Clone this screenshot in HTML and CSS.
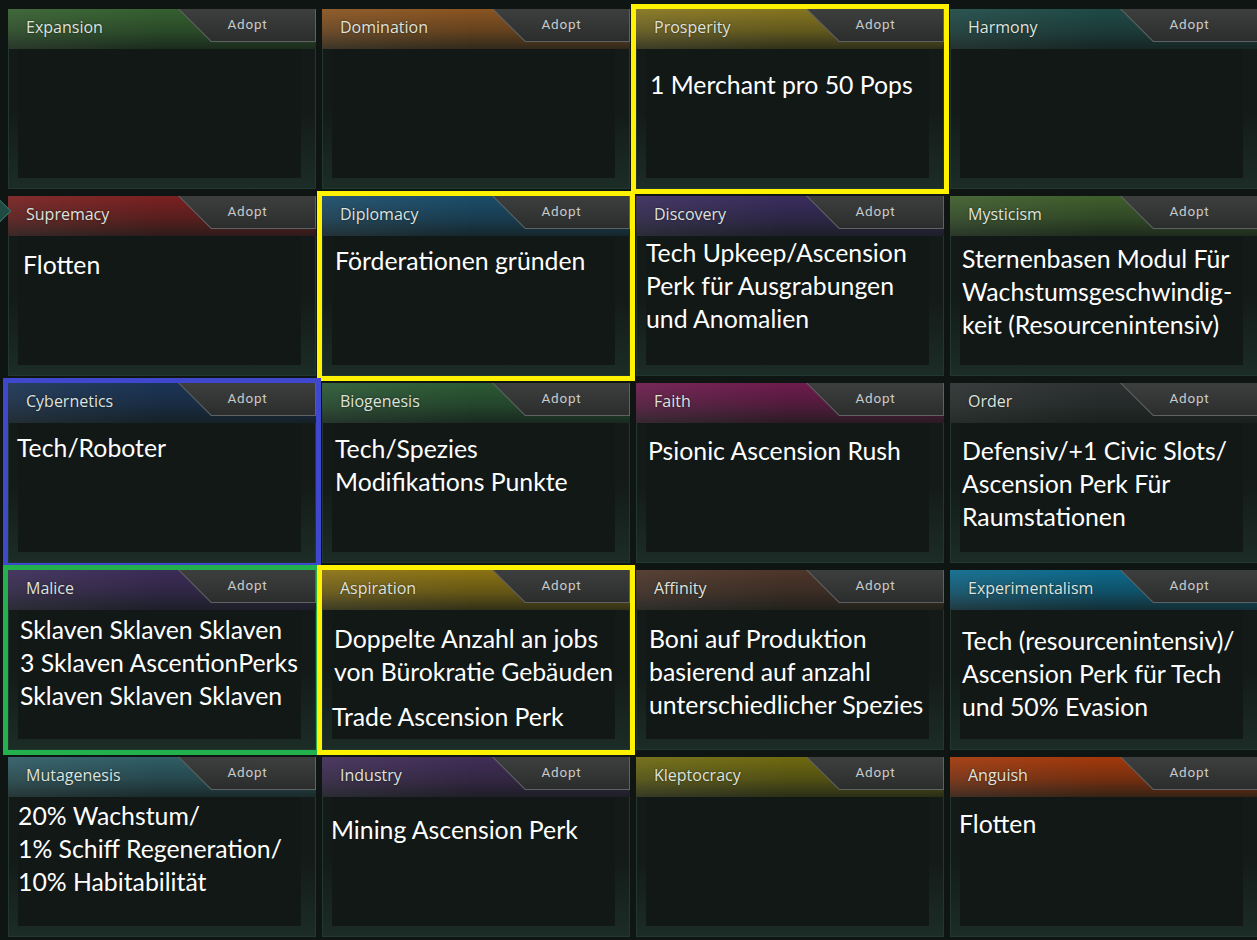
FILE: index.html
```html
<!DOCTYPE html>
<html lang="de">
<head>
<meta charset="utf-8">
<title>Traditions</title>
<link rel="stylesheet" href="styles.css">
</head>
<body>
<div class="edge-mark"></div>
<main class="grid">
  <section class="card expansion">
    <header class="head"><span class="title">Expansion</span><span class="adopt"><span>Adopt</span></span></header>
    <div class="panel"></div>
  </section>
  <section class="card domination">
    <header class="head"><span class="title">Domination</span><span class="adopt"><span>Adopt</span></span></header>
    <div class="panel"></div>
  </section>
  <section class="card prosperity mark-yellow">
    <header class="head"><span class="title">Prosperity</span><span class="adopt"><span>Adopt</span></span></header>
    <div class="panel drop-19 in-4"><p>1 Merchant pro 50 Pops</p></div>
  </section>
  <section class="card harmony">
    <header class="head"><span class="title">Harmony</span><span class="adopt"><span>Adopt</span></span></header>
    <div class="panel"></div>
  </section>

  <section class="card supremacy">
    <header class="head"><span class="title">Supremacy</span><span class="adopt"><span>Adopt</span></span></header>
    <div class="panel drop-12 in-5"><p>Flotten</p></div>
  </section>
  <section class="card diplomacy mark-yellow">
    <header class="head"><span class="title">Diplomacy</span><span class="adopt"><span>Adopt</span></span></header>
    <div class="panel drop-8 in-3"><p>Förderationen gründen</p></div>
  </section>
  <section class="card discovery">
    <header class="head"><span class="title">Discovery</span><span class="adopt"><span>Adopt</span></span></header>
    <div class="panel drop-0 in-0"><p>Tech Upkeep/Ascension<br>Perk für Ausgrabungen<br>und Anomalien</p></div>
  </section>
  <section class="card mysticism">
    <header class="head"><span class="title">Mysticism</span><span class="adopt"><span>Adopt</span></span></header>
    <div class="panel drop-6"><p>Sternenbasen Modul Für<br>Wachstumsgeschwindig-<br>keit (Resourcenintensiv)</p></div>
  </section>

  <section class="card cybernetics mark-blue">
    <header class="head"><span class="title">Cybernetics</span><span class="adopt"><span>Adopt</span></span></header>
    <div class="panel drop-8 in-n1"><p>Tech/Roboter</p></div>
  </section>
  <section class="card biogenesis">
    <header class="head"><span class="title">Biogenesis</span><span class="adopt"><span>Adopt</span></span></header>
    <div class="panel drop-9 in-3"><p>Tech/Spezies<br>Modifikations Punkte</p></div>
  </section>
  <section class="card faith">
    <header class="head"><span class="title">Faith</span><span class="adopt"><span>Adopt</span></span></header>
    <div class="panel drop-11"><p>Psionic Ascension Rush</p></div>
  </section>
  <section class="card order">
    <header class="head"><span class="title">Order</span><span class="adopt"><span>Adopt</span></span></header>
    <div class="panel drop-11"><p>Defensiv/+1 Civic Slots/<br>Ascension Perk Für<br>Raumstationen</p></div>
  </section>

  <section class="card malice mark-green">
    <header class="head"><span class="title">Malice</span><span class="adopt"><span>Adopt</span></span></header>
    <div class="panel drop-3"><p>Sklaven Sklaven Sklaven<br>3 Sklaven AscentionPerks<br>Sklaven Sklaven Sklaven</p></div>
  </section>
  <section class="card aspiration mark-yellow">
    <header class="head"><span class="title">Aspiration</span><span class="adopt"><span>Adopt</span></span></header>
    <div class="panel drop-12"><p>Doppelte Anzahl an jobs<br>von Bürokratie Gebäuden</p><p class="extra">Trade Ascension Perk</p></div>
  </section>
  <section class="card affinity">
    <header class="head"><span class="title">Affinity</span><span class="adopt"><span>Adopt</span></span></header>
    <div class="panel drop-12 in-3"><p>Boni auf Produktion<br>basierend auf anzahl<br>unterschiedlicher Spezies</p></div>
  </section>
  <section class="card experimentalism">
    <header class="head"><span class="title">Experimentalism</span><span class="adopt"><span>Adopt</span></span></header>
    <div class="panel drop-14"><p>Tech (resourcenintensiv)/<br>Ascension Perk für Tech<br>und 50% Evasion</p></div>
  </section>

  <section class="card mutagenesis">
    <header class="head"><span class="title">Mutagenesis</span><span class="adopt"><span>Adopt</span></span></header>
    <div class="panel drop-2 in-0"><p>20% Wachstum/<br>1% Schiff Regeneration/<br>10% Habitabilität</p></div>
  </section>
  <section class="card industry">
    <header class="head"><span class="title">Industry</span><span class="adopt"><span>Adopt</span></span></header>
    <div class="panel drop-16 in-n1"><p>Mining Ascension Perk</p></div>
  </section>
  <section class="card kleptocracy">
    <header class="head"><span class="title">Kleptocracy</span><span class="adopt"><span>Adopt</span></span></header>
    <div class="panel"></div>
  </section>
  <section class="card anguish">
    <header class="head"><span class="title">Anguish</span><span class="adopt"><span>Adopt</span></span></header>
    <div class="panel drop-10 in-n1"><p>Flotten</p></div>
  </section>
</main>
</body>
</html>
```
FILE: styles.css
```css
html, body {
  margin: 0;
  padding: 0;
  width: 1257px;
  height: 940px;
  overflow: hidden;
  background: #0e1513;
}

body {
  position: relative;
  font-family: "Open Sans", "Noto Sans", sans-serif;
}

.edge-mark {
  position: absolute;
  left: -8px;
  top: 203px;
  width: 14px;
  height: 14px;
  background: #1f4a42;
  border: 1px solid #3b6e62;
  transform: rotate(45deg);
}

.grid {
  display: grid;
  grid-template-columns: repeat(4, 308px);
  grid-auto-rows: 180px;
  column-gap: 6px;
  row-gap: 7px;
  padding: 9px 0 0 8px;
  width: 1258px;
  box-sizing: border-box;
}

.card {
  --c: #3a6a35;
  display: flex;
  flex-direction: column;
  box-sizing: border-box;
  border: 1px solid #22372e;
  border-top: 0;
  background: linear-gradient(180deg, #131a18 0%, #131a18 55%, #1c2c26 100%);
  min-width: 0;
}

.mark-yellow { outline: 5px solid #fff200; }
.mark-blue { outline: 5px solid #3f48cc; }
.mark-green { outline: 5px solid #22b14c; }

.head {
  display: flex;
  height: 40px;
  flex: none;
  margin: 0 -1px;
  background:
    linear-gradient(90deg, rgba(255,255,255,0.06) 0%, rgba(255,255,255,0) 50%),
    linear-gradient(180deg,
      var(--c) 0%,
      color-mix(in srgb, var(--c) 68%, #131a18) 55%,
      color-mix(in srgb, var(--c) 25%, #131a18) 100%);
}

.title {
  flex: 1;
  padding: 2px 0 0 18px;
  line-height: 33px;
  font-size: 16px;
  color: #dfe3df;
  text-shadow: 0 0 2px rgba(0,0,0,0.6);
  white-space: nowrap;
}

.adopt {
  flex: none;
  width: 138px;
  height: 33px;
  padding: 0 1px 1px 0;
  box-sizing: border-box;
  background: #5f6262;
  clip-path: polygon(0 0, 100% 0, 100% 100%, 33px 100%);
}

.adopt span {
  display: flex;
  align-items: center;
  justify-content: center;
  height: 100%;
  padding: 0 0 2px 2px;
  box-sizing: border-box;
  background: linear-gradient(180deg, #3d3e3e 0%, #333434 60%, #2b2c2c 100%);
  clip-path: polygon(1.5px 0, 100% 0, 100% 100%, 33.5px 100%);
  font-family: Roboto, "Liberation Sans", sans-serif;
  font-size: 13.5px;
  font-weight: 400;
  letter-spacing: 0.8px;
  color: #c9caca;
}

.panel {
  flex: 1;
  margin: 0 14px 10px 9px;
  background: #111816;
  color: #ffffff;
  font-family: Lato, "Open Sans", sans-serif;
  font-size: 24.8px;
  line-height: 33px;
  padding-left: 2px;
  white-space: nowrap;
}

.panel p { margin: 0; }
.panel p.extra { margin: 12px 0 0 -2px; }

.drop-0 { padding-top: 0; }
.drop-2 { padding-top: 2px; }
.drop-3 { padding-top: 3px; }
.drop-6 { padding-top: 6px; }
.drop-8 { padding-top: 8px; }
.drop-9 { padding-top: 9px; }
.drop-10 { padding-top: 10px; }
.drop-11 { padding-top: 11px; }
.drop-12 { padding-top: 12px; }
.drop-14 { padding-top: 14px; }
.drop-16 { padding-top: 16px; }
.drop-19 { padding-top: 19px; }

.in-5 { padding-left: 5px; }
.in-4 { padding-left: 4px; }
.in-3 { padding-left: 3px; }
.in-0 { padding-left: 0; }
.in-n1 { padding-left: 0; }
.in-n1 p { margin-left: -1px; }

.expansion { --c: #35602f; }
.domination { --c: #8a5420; }
.prosperity { --c: #86751f; }
.harmony { --c: #1f4a47; }
.supremacy { --c: #7a2020; }
.diplomacy { --c: #1b4d6b; }
.discovery { --c: #3a2c5e; }
.mysticism { --c: #3f5e2c; }
.cybernetics { --c: #1b3456; }
.biogenesis { --c: #2b5a35; }
.faith { --c: #6e1b4c; }
.order { --c: #2d3131; }
.malice { --c: #3c2c58; }
.aspiration { --c: #8c7212; }
.affinity { --c: #4e3529; }
.experimentalism { --c: #0d6a8d; }
.mutagenesis { --c: #2f5d66; }
.industry { --c: #422d58; }
.kleptocracy { --c: #6f6a10; }
.anguish { --c: #a3380a; }
```
